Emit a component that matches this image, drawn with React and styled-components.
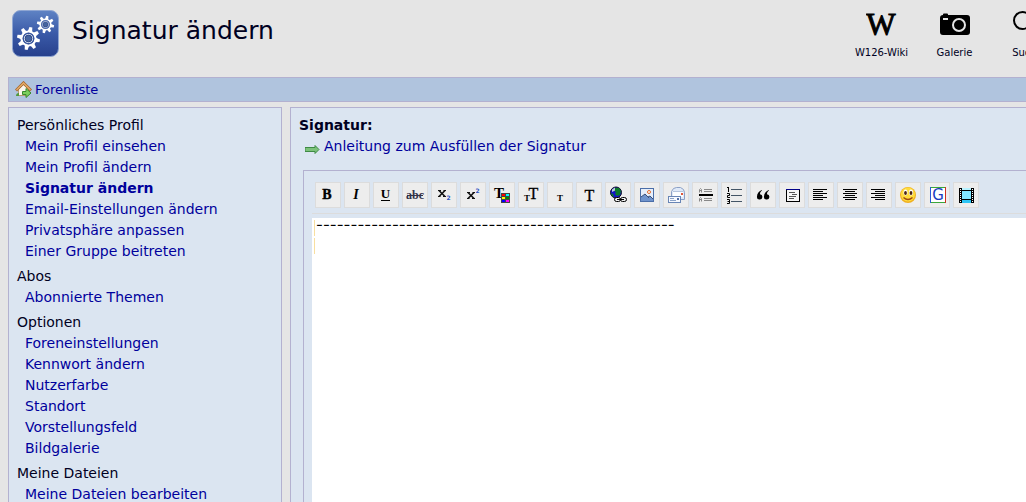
// THIRD PARTY IMPORTS
import React from 'react';
import styled, { createGlobalStyle } from 'styled-components';

const GlobalStyle = createGlobalStyle`
  * {
    box-sizing: border-box;
  }
  html,
  body,
  #root {
    height: 100%;
    margin: 0;
  }
  body {
    background: #e5e5e5;
    color: #000022;
    font-family: Verdana, 'DejaVu Sans', sans-serif;
    font-size: 14px;
    line-height: 21px;
    overflow: hidden;
  }
  a {
    color: #00009c;
    text-decoration: none;
  }
  a:hover {
    text-decoration: underline;
  }
`;

// LAYOUT
const Page = styled.div`
  display: flex;
  flex-direction: column;
  height: 100%;
  padding-left: 8px;
  overflow: hidden;
`;

const Header = styled.header`
  display: flex;
  align-items: flex-start;
  flex: none;
  height: 77px;
  padding: 10px 0 0 4px;
`;

const Title = styled.h1`
  flex: 1;
  margin: 0 0 0 13px;
  font-size: 25px;
  font-weight: normal;
  line-height: 42px;
  white-space: nowrap;
`;

const HeaderNav = styled.nav`
  display: flex;
  flex: none;
  margin-right: -38px;
`;

const NavItem = styled.a`
  display: flex;
  flex-direction: column;
  align-items: center;
  width: 73px;
  font-size: 10px;
  line-height: 21px;
  && {
    color: #000022;
  }
`;

const Breadcrumb = styled.nav`
  display: flex;
  align-items: center;
  flex: none;
  gap: 3px;
  height: 25px;
  padding-left: 6px;
  border: 1px solid #b3b1d0;
  border-right: 0;
  background: #b0c4de;
  font-size: 13px;
`;

const Columns = styled.div`
  display: flex;
  flex: 1;
  gap: 8px;
  min-height: 0;
  margin-top: 5px;
`;

const Sidebar = styled.aside`
  flex: none;
  width: 274px;
  padding: 7px 8px;
  border: 1px solid #b3b1d0;
  border-bottom: 0;
  background: #dbe5f1;
  overflow: hidden;
`;

const Main = styled.main`
  display: flex;
  flex-direction: column;
  flex: 1;
  min-width: 0;
  padding: 7px 0 0 8px;
  border: 1px solid #b3b1d0;
  border-width: 1px 0 0 1px;
  background: #dbe5f1;
`;

// SIDEBAR MENU
const MenuGroup = styled.section`
  margin-bottom: 4px;
`;

const MenuHead = styled.h2`
  margin: 0;
  font-size: 14px;
  font-weight: normal;
`;

const MenuList = styled.ul`
  margin: 0;
  padding: 0 0 0 8px;
  list-style: none;
`;

const MenuLink = styled.a`
  font-weight: ${(props) => (props.$active ? 'bold' : 'normal')};
`;

// EDITOR
const FieldLabel = styled.label`
  font-weight: bold;
`;

const Help = styled.div`
  display: flex;
  align-items: center;
  gap: 4px;
  padding-left: 6px;
`;

const Editor = styled.div`
  display: flex;
  flex-direction: column;
  flex: 1;
  margin: 13px 0 0 4px;
  padding: 11px 0 0 8px;
  border: 1px solid #b3b1d0;
  border-width: 1px 0 0 1px;
`;

const Toolbar = styled.div`
  display: flex;
  gap: 3px;
  padding: 0 0 5px 3px;
  border-bottom: 1px solid #dcdcdc;
`;

const ToolButton = styled.button`
  flex: none;
  width: 26px;
  height: 26px;
  padding: 0;
  border: 1px solid #dcdcdc;
  background: #ededed;
  cursor: pointer;
  svg {
    display: block;
  }
`;

const TextArea = styled.textarea`
  flex: 1;
  width: 100%;
  margin-top: 4px;
  padding: 0 4px;
  border: 0;
  outline: 0;
  resize: none;
  background:
    linear-gradient(#f8dfa0, #f8dfa0) 2px 2px / 1px 16px no-repeat,
    linear-gradient(#f8dfa0, #f8dfa0) 2px 20px / 1px 16px no-repeat,
    #ffffff;
  color: #000000;
  font-family: Inter, sans-serif;
  font-size: 15px;
  line-height: 14px;
`;

// GLYPHS INSIDE THE TOOLBAR ICONS
const Glyph = styled.text`
  font-family: 'Liberation Serif', serif;
  font-size: ${(props) => props.$size || 14}px;
  font-weight: ${(props) => (props.$bold ? 'bold' : 'normal')};
  font-style: ${(props) => (props.$italic ? 'italic' : 'normal')};
  text-anchor: middle;
`;

const SansGlyph = styled(Glyph)`
  font-family: 'DejaVu Sans', sans-serif;
`;

// HORIZONTAL RULES, [x, y, width]
const Lines = ({ rows, color = '#000' }) =>
  rows.map(([x, y, w]) => (
    <rect key={y} x={x} y={y} width={w} height="1" fill={color} />
  ));

const tools = [
  ['Fett', <Glyph x="11" y="16" stroke="#000" strokeWidth="0.4" $bold>B</Glyph>],
  ['Kursiv', <Glyph x="11" y="16" $bold $italic>I</Glyph>],
  [
    'Unterstrichen',
    <>
      <Glyph x="11.5" y="15" $size={13} $bold>U</Glyph>
      <rect x="7" y="17" width="9" height="1" />
    </>,
  ],
  [
    'Durchgestrichen',
    <g fill="#33334a">
      <Glyph x="12" y="16" $size={12} $bold>abc</Glyph>
      <rect x="4" y="12" width="16" height="1" />
    </g>,
  ],
  [
    'Tiefgestellt',
    <>
      <path d="M7 7.5l6 6M13 7.5l-6 6" stroke="#111" strokeWidth="1.6" />
      <path d="M6 7.5h3M11.5 7.5h2.5M6 13.5h2.5M11 13.5h3" stroke="#111" />
      <SansGlyph x="16.5" y="17" $size={6} $bold fill="#2a54c0">2</SansGlyph>
    </>,
  ],
  [
    'Hochgestellt',
    <>
      <path d="M7 9.5l6 6M13 9.5l-6 6" stroke="#111" strokeWidth="1.6" />
      <path d="M6 9.5h3M11.5 9.5h2.5M6 15.5h2.5M11 15.5h3" stroke="#111" />
      <SansGlyph x="16.5" y="10" $size={6} $bold fill="#2a54c0">2</SansGlyph>
    </>,
  ],
  [
    'Schriftfarbe',
    <>
      <Glyph x="9" y="15" $size={15} $bold>T</Glyph>
      <rect x="11" y="10" width="9" height="10" fill="#444" />
      <rect x="12" y="11" width="3" height="2" fill="#f00" />
      <rect x="16" y="11" width="3" height="2" fill="#0ff" />
      <rect x="12" y="14" width="3" height="2" fill="#ff0" />
      <rect x="16" y="14" width="3" height="2" fill="#080" />
      <rect x="12" y="17" width="3" height="2" fill="#00f" />
      <rect x="16" y="17" width="3" height="2" fill="#f0f" />
    </>,
  ],
  [
    'Schriftgröße',
    <>
      <Glyph x="8" y="18" $size={9} $bold>T</Glyph>
      <Glyph x="14.5" y="16" stroke="#000" strokeWidth="0.3" $size={16}>T</Glyph>
    </>,
  ],
  ['Klein', <Glyph x="12" y="18" $size={9} $bold>T</Glyph>],
  ['Groß', <Glyph x="12.5" y="18" stroke="#000" strokeWidth="0.3" $size={16}>T</Glyph>],
  [
    'Link',
    <>
      <circle cx="10" cy="9.5" r="5.5" fill="#1414c8" stroke="#112" />
      <path d="M9 5l4 0 2 3-1 4-3 1-2-2 1-2-2-1zM5 10l2 1 1 3-2-1z" fill="#0a7a2a" />
      <path d="M6 6.5l3-2v3l-3 1.5z" fill="#bcd" />
      <rect x="8.5" y="14.5" width="6" height="4" rx="2" fill="#eee" stroke="#000" />
      <rect x="14.5" y="14.5" width="6" height="4" rx="2" fill="#eee" stroke="#000" />
      <path d="M11 16.5h7" stroke="#000" />
    </>,
  ],
  [
    'Bild',
    <>
      <rect x="5.5" y="5.5" width="13" height="13" fill="#e6eefa" stroke="#4b6ea8" />
      <circle cx="14" cy="9" r="1.5" fill="#fff" stroke="#e06a2a" />
      <path d="M6 14l4-3 3 3 2-1 3 3v2H6z" fill="#6f93cc" />
      <path d="M6 14l4-3 4 4M13 14l2-1 3 3" fill="none" stroke="#3b4f78" />
    </>,
  ],
  [
    'E-Mail',
    <>
      <path d="M7.5 16.5v-8l2-3 3-1h4l3 2 1 3v7z" fill="#dfe9f8" stroke="#8ba0c6" />
      <rect x="9" y="8" width="10" height="6" fill="#fbfdff" />
      <path d="M9 8.5h10" stroke="#b4c4de" />
      <rect x="4.5" y="13.5" width="12" height="6" fill="#f6f9ff" stroke="#6885b5" />
      <path d="M6 15.5h4M6 17.5h6" stroke="#8ba3c8" />
      <rect x="17" y="10" width="2" height="2" fill="#e0583a" />
      <rect x="13" y="15" width="2" height="2" fill="#506fa8" />
    </>,
  ],
  [
    'Trennlinie',
    <>
      <rect x="6" y="11" width="14" height="2" />
      <path d="M6.5 9.5V6.5L7.5 5.5l1 1v3M6.5 7.5h2M6.5 18.5v-3l1-1 1 1v3M6.5 16.5h2" fill="none" stroke="#888" />
      <Lines color="#888" rows={[[11, 6, 8], [11, 8, 8], [11, 15, 8], [11, 17, 8]]} />
    </>,
  ],
  [
    'Liste',
    <>
      <path d="M5 4.5h1.5M6.5 4v5M5 10.5h2.5v2h-2v2h2.500M5 16.5h2.5v4H5M5.5 18.5h2" fill="none" stroke="#000" />
      <Lines color="#456" rows={[[9, 6, 11], [9, 12, 11], [9, 18, 11]]} />
    </>,
  ],
  [
    'Zitat',
    <path d="M11 7C8 8 6 10.5 6 13.5A2.7 2.7 0 1 0 9 11.2C9 9.5 9.7 8.4 11 7.5zM18 7c-3 1-5 3.5-5 6.5a2.7 2.7 0 1 0 3-2.300c0-1.700.7-2.800 2-3.700z" />,
  ],
  [
    'Code',
    <>
      <rect x="6.5" y="6.5" width="13" height="12" fill="#f6f6f6" stroke="#000" />
      <rect x="6" y="6" width="14" height="1" fill="#008" />
      <Lines color="#555" rows={[[9, 9, 6], [12, 11, 5], [9, 13, 7], [9, 15, 5]]} />
    </>,
  ],
  [
    'Linksbündig',
    <Lines rows={[[4, 6, 14], [4, 8, 10], [4, 10, 14], [4, 12, 10], [4, 14, 14], [4, 16, 10]]} />,
  ],
  [
    'Zentriert',
    <Lines rows={[[5, 6, 14], [7, 8, 10], [5, 10, 14], [7, 12, 10], [5, 14, 14], [7, 16, 10]]} />,
  ],
  [
    'Rechtsbündig',
    <Lines rows={[[4, 6, 14], [8, 8, 10], [4, 10, 14], [8, 12, 10], [4, 14, 14], [8, 16, 10]]} />,
  ],
  [
    'Smileys',
    <>
      <circle cx="12" cy="12" r="8" fill="#f0b020" />
      <circle cx="12" cy="11.5" r="7" fill="#ffdc3c" />
      <ellipse cx="9.5" cy="9.5" rx="2" ry="3" fill="#fff" />
      <ellipse cx="15" cy="9.5" rx="2" ry="3" fill="#fff" />
      <ellipse cx="9.5" cy="10" rx="1.4" ry="2" fill="#4a2410" />
      <ellipse cx="15" cy="10" rx="1.4" ry="2" fill="#4a2410" />
      <path d="M7.5 14.5q4.5 4 9 0" fill="none" stroke="#a04a10" strokeWidth="1.4" />
    </>,
  ],
  [
    'Google',
    <>
      <rect x="5" y="4" width="16" height="16" fill="#fff" />
      <path d="M5 4.5h16M5 19.5h16" stroke="#3aa63a" />
      <path d="M5.5 4v16" stroke="#2a5bd8" />
      <path d="M20.5 4v16" stroke="#d03020" />
      <SansGlyph x="13" y="17" $size={15} fill="#1a3cc0">G</SansGlyph>
    </>,
  ],
  [
    'Video',
    <>
      <rect x="5" y="5" width="15" height="15" />
      <rect x="8" y="5" width="9" height="2" fill="#b8f2ff" />
      <rect x="8" y="8" width="9" height="8" fill="#82e6ff" />
      <rect x="8" y="17" width="9" height="3" fill="#2cc4f4" />
      <path d="M6.5 6v14M18.5 6v14" stroke="#fff" strokeDasharray="1 1" />
    </>,
  ],
];

const menu = [
  {
    head: 'Persönliches Profil',
    links: [
      'Mein Profil einsehen',
      'Mein Profil ändern',
      'Signatur ändern',
      'Email-Einstellungen ändern',
      'Privatsphäre anpassen',
      'Einer Gruppe beitreten',
    ],
  },
  { head: 'Abos', links: ['Abonnierte Themen'] },
  {
    head: 'Optionen',
    links: [
      'Foreneinstellungen',
      'Kennwort ändern',
      'Nutzerfarbe',
      'Standort',
      'Vorstellungsfeld',
      'Bildgalerie',
    ],
  },
  { head: 'Meine Dateien', links: ['Meine Dateien bearbeiten'] },
];

// ICONS
// eight teeth, drawn as spokes behind the ring
const Gear = ({ x, y, scale }) => (
  <g transform={`translate(${x} ${y}) scale(${scale})`}>
    {[0, 45, 90, 135, 180, 225, 270, 315].map((deg) => (
      <path key={deg} d="M-2.2-7L-1.5-11.5h3L2.2-7z" fill="#fff" transform={`rotate(${deg + 12})`} />
    ))}
    <circle r="7" fill="none" stroke="#fff" strokeWidth="2.2" />
    <circle r="5.2" fill="#e8eefa" stroke="#38559c" strokeWidth="1.2" />
    <circle r="3.4" fill="#46649f" stroke="#2c4585" />
  </g>
);

const ProfileIcon = () => (
  <svg width="47" height="47" viewBox="0 0 47 47" aria-hidden="true">
    <defs>
      <linearGradient id="tile" x1="0" y1="0" x2="0" y2="1">
        <stop offset="0" stopColor="#5f83c4" />
        <stop offset="0.5" stopColor="#3a5aa8" />
        <stop offset="1" stopColor="#27408c" />
      </linearGradient>
    </defs>
    <rect x="0.5" y="0.5" width="46" height="46" rx="8" fill="url(#tile)" stroke="#8fa6d2" />
    <Gear x={16.5} y={28.5} scale={1} />
    <Gear x={33.5} y={14.5} scale={0.75} />
  </svg>
);

const WikiIcon = () => (
  <svg width="32" height="32" viewBox="0 0 32 32" aria-hidden="true">
    <Glyph x="15" y="25" stroke="#000" strokeWidth="1" $size={31}>W</Glyph>
  </svg>
);

const CameraIcon = () => (
  <svg width="32" height="32" viewBox="0 0 32 32" aria-hidden="true">
    <path d="M4 5V4.5q0-1 1-1h3q1 0 1 1V5h19q3 0 3 3v14q0 3-3 3H4q-3 0-3-3V8q0-3 3-3z" />
    <rect x="4" y="8" width="5" height="2" fill="#e5e5e5" />
    <circle cx="20" cy="15" r="6" fill="none" stroke="#e5e5e5" strokeWidth="2" />
  </svg>
);

const SearchIcon = () => (
  <svg width="32" height="32" viewBox="0 0 32 32" aria-hidden="true">
    <circle cx="10.5" cy="10.5" r="8.5" fill="none" stroke="#000" strokeWidth="2" />
    <path d="M17 17l9 9" stroke="#000" strokeWidth="3" />
  </svg>
);

const HomeIcon = () => (
  <svg width="17" height="17" viewBox="0 0 17 17" aria-hidden="true">
    <path d="M3.5 8v6.500h10V8L8.5 3z" fill="#fbf7ee" stroke="#b89a70" />
    <path d="M1 9.5L8.5 2 16 9.5" fill="none" stroke="#a8682c" strokeWidth="3" />
    <path d="M1.5 9L8.5 2l7 7" fill="none" stroke="#e3ac6c" strokeWidth="1.4" />
    <path d="M1 15q0-3 3-3v3z" fill="#4f9a3c" />
    <path d="M7.5 10.5H11V7.500l5 4.500-5 4.500v-3H7.500z" fill="#7ccf5c" stroke="#38892c" />
  </svg>
);

const ArrowIcon = () => (
  <svg width="15" height="16" viewBox="0 0 15 16" aria-hidden="true">
    <path d="M0 8.5h10V6.5l4 4-4 4v-2H0z" fill="#7cc27a" stroke="#3f8a45" />
  </svg>
);

const App = () => (
  <>
    <GlobalStyle />
    <Page>
      <Header>
        <ProfileIcon />
        <Title>Signatur ändern</Title>
        <HeaderNav>
          <NavItem href="#wiki">
            <WikiIcon />
            W126-Wiki
          </NavItem>
          <NavItem href="#galerie">
            <CameraIcon />
            Galerie
          </NavItem>
          <NavItem href="#suche">
            <SearchIcon />
            Suche
          </NavItem>
        </HeaderNav>
      </Header>

      <Breadcrumb>
        <HomeIcon />
        <a href="#forenliste">Forenliste</a>
      </Breadcrumb>

      <Columns>
        <Sidebar>
          {menu.map(({ head, links }) => (
            <MenuGroup key={head}>
              <MenuHead>{head}</MenuHead>
              <MenuList>
                {links.map((link) => (
                  <li key={link}>
                    <MenuLink href="#profil" $active={link === 'Signatur ändern'}>
                      {link}
                    </MenuLink>
                  </li>
                ))}
              </MenuList>
            </MenuGroup>
          ))}
        </Sidebar>

        <Main>
          <FieldLabel htmlFor="signatur">Signatur:</FieldLabel>
          <Help>
            <ArrowIcon />
            <a href="#anleitung">Anleitung zum Ausfüllen der Signatur</a>
          </Help>
          <Editor>
            <Toolbar>
              {tools.map(([name, icon]) => (
                <ToolButton key={name} type="button" title={name} aria-label={name}>
                  <svg width="24" height="24" viewBox="0 0 24 24" aria-hidden="true">
                    {icon}
                  </svg>
                </ToolButton>
              ))}
            </Toolbar>
            <TextArea id="signatur" spellCheck="false" defaultValue={'-'.repeat(52)} />
          </Editor>
        </Main>
      </Columns>
    </Page>
  </>
);

export default App;
